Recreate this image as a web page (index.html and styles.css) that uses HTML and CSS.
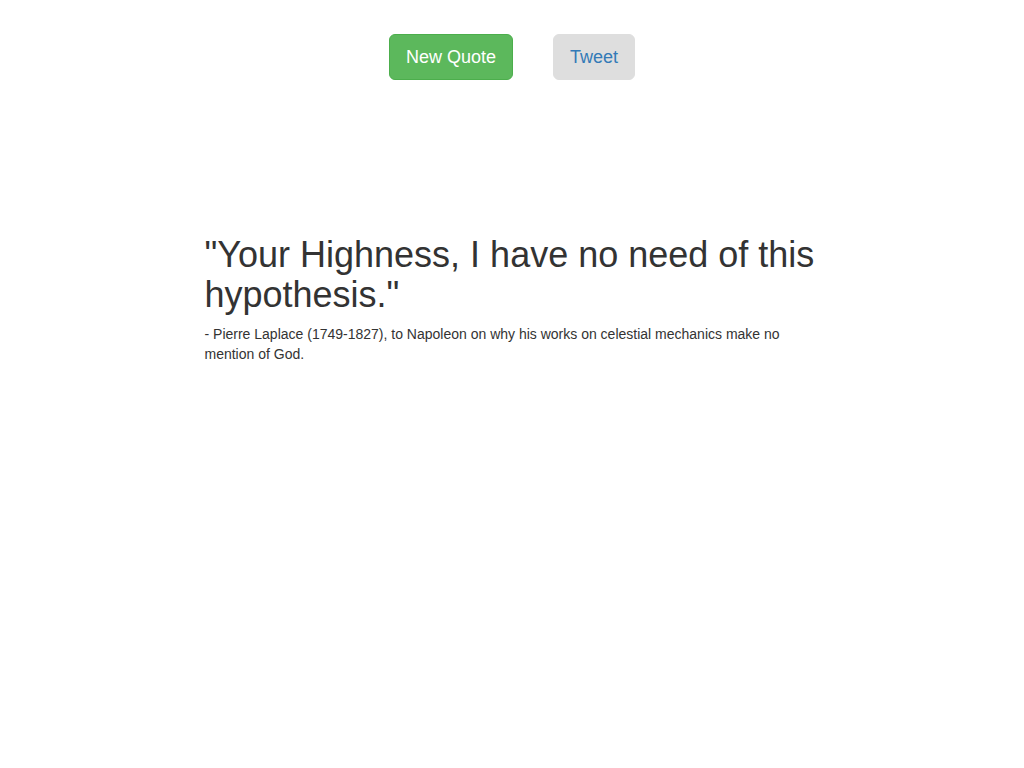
FILE: index.html
```html
<!DOCTYPE html>
<html>
<head>
<meta charset="utf-8">
<link rel="stylesheet" href="styles.css">
</head>
<body>
<div class="buttons">
  <button class="btn btn-green">New Quote</button>
  <button class="btn btn-gray">Tweet</button>
</div>
<div class="quote">
  <h1 class="quote-text">"Your Highness, I have no need of this hypothesis."</h1>
  <p class="quote-author">- Pierre Laplace (1749-1827), to Napoleon on why his works on celestial mechanics make no mention of God.</p>
</div>
</body>
</html>
```
FILE: styles.css
```css
html, body {
  margin: 0;
  padding: 0;
  background: #fff;
  font-family: "Liberation Sans", Arial, sans-serif;
  color: #333;
  font-size: 14px;
  line-height: 20px;
}
.buttons {
  display: flex;
  justify-content: center;
  gap: 40px;
  padding-top: 34px;
}
.btn {
  font-family: "Liberation Sans", Arial, sans-serif;
  font-size: 18px;
  line-height: 24px;
  padding: 10px 16px;
  border-radius: 6px;
  border: 1px solid transparent;
  cursor: pointer;
}
.btn-green {
  background: #5cb85c;
  border-color: #4cae4c;
  color: #fff;
}
.btn-gray {
  background: #dedede;
  border-color: #dedede;
  color: #337ab7;
}
.quote {
  width: 617px;
  margin: 155px auto 0;
  padding-left: 2px;
}
.quote-text {
  font-size: 36px;
  line-height: 39.6px;
  font-weight: 500;
  margin: 0 0 10px;
  color: #333;
}
.quote-author {
  margin: 0;
}
```
